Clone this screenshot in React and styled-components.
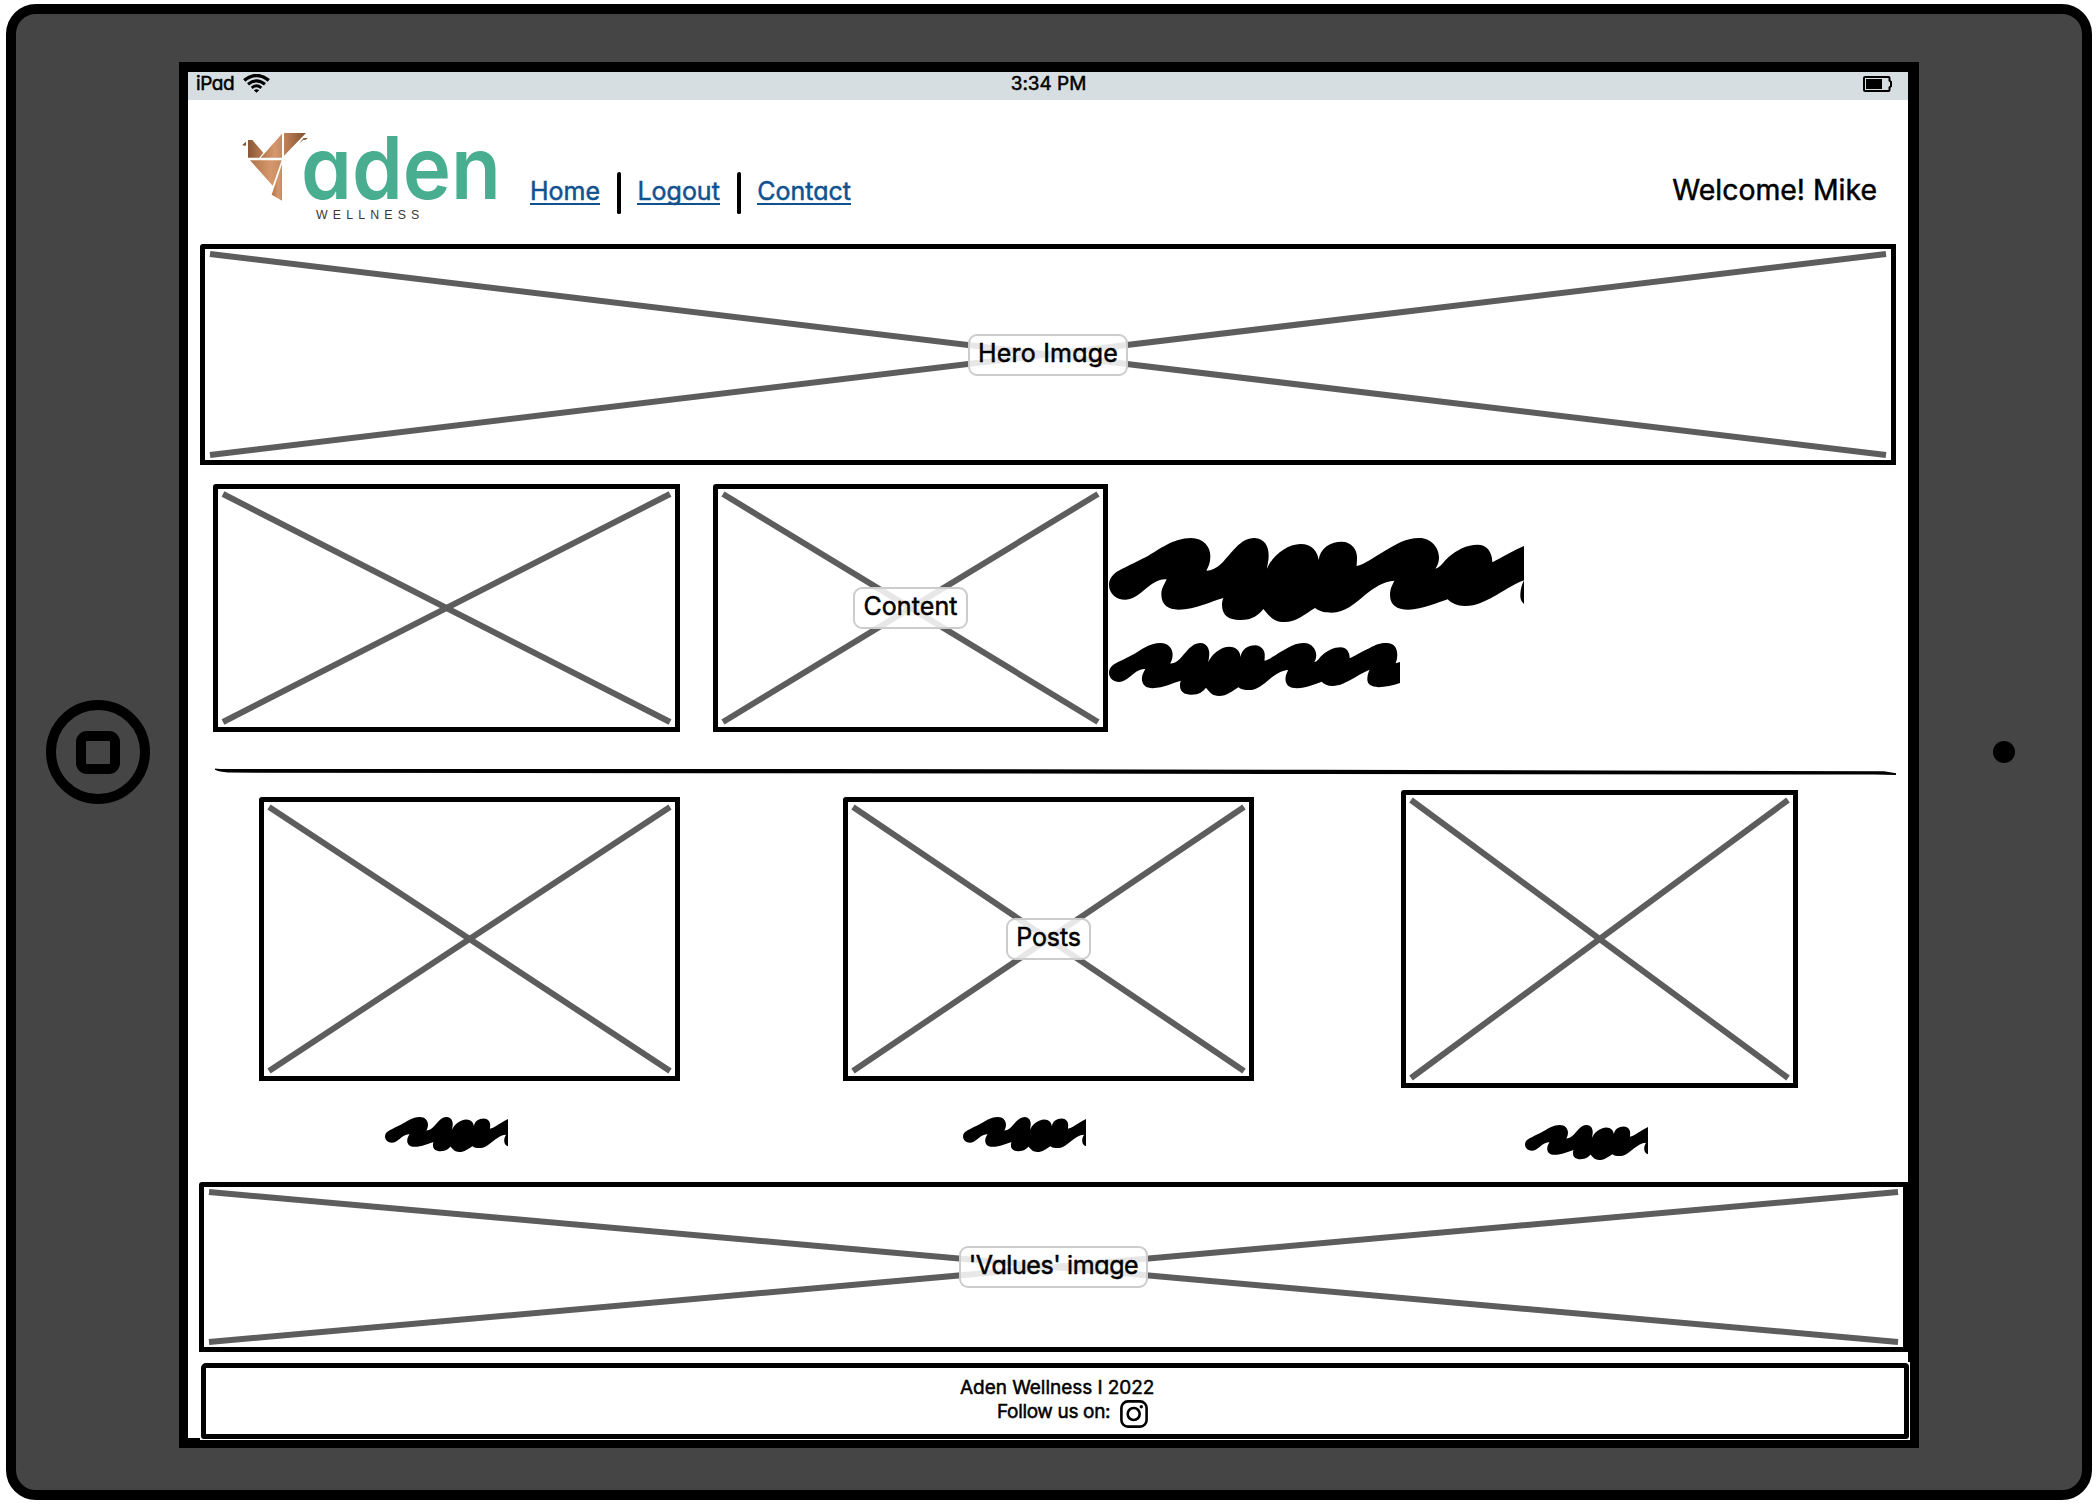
import React from 'react';
import styled, { createGlobalStyle } from 'styled-components';

const Global = createGlobalStyle`
  *, *::before, *::after { box-sizing: border-box; }
  body { margin: 0; background: #fff; }
`;

const Page = styled.div`
  width: 2096px;
  height: 1504px;
  padding: 4px 4px 4px 6px;
  overflow: hidden;
  color: #000;
  font-family: Inter, 'Liberation Sans', sans-serif;
  font-feature-settings: 'cv11' 1;
  -webkit-text-stroke: 0.5px currentColor;
`;

const Device = styled.div`
  display: flex;
  width: 2086px;
  height: 1496px;
  border: 10px solid #000;
  border-radius: 30px;
  background: #454545;
`;

const Bezel = styled.div`
  flex: none;
  display: flex;
  align-items: center;
  width: ${(p) => p.$width}px;
  padding-left: ${(p) => p.$inset}px;
`;

const HomeButton = styled.div`
  display: grid;
  place-items: center;
  width: 104px;
  height: 104px;
  border: 10px solid #000;
  border-radius: 50%;
`;

const HomeGlyph = styled.div`
  width: 44px;
  height: 43px;
  border: 10px solid #000;
  border-radius: 11px;
`;

const Camera = styled.div`
  width: 22px;
  height: 22px;
  border-radius: 50%;
  background: #000;
`;

const Screen = styled.div`
  flex: none;
  width: 1740px;
  height: 1386px;
  margin-top: 48px;
  border: solid #000;
  border-width: 10px 11px 10px 9px;
  background: #fff;
`;

const StatusBar = styled.div`
  display: grid;
  grid-template-columns: 1fr auto 1fr;
  height: 28px;
  padding: 0 16px 0 8px;
  background: #d7dee1;
  font-size: 19px;
  line-height: 23px;
`;

const StatusGroup = styled.div`
  display: flex;
  gap: 9px;
  justify-content: ${(p) => (p.$end ? 'flex-end' : 'flex-start')};
  letter-spacing: -0.4px;
`;

const StatusIcon = styled.svg`
  flex: none;
  margin-top: ${(p) => p.$top}px;
`;

const Clock = styled.span`
  margin-left: 9px;
  letter-spacing: -0.05px;
`;

const Header = styled.header`
  display: flex;
  align-items: flex-start;
  height: 144px;
  padding: 0 31px 0 32px;
`;

const Logo = styled.svg`
  flex: none;
  width: 290px;
  height: 130px;
  -webkit-text-stroke: 0;
`;

const Nav = styled.nav`
  display: flex;
  gap: 16.7px;
  margin: 72px 0 0 20px;
`;

const NavLink = styled.a`
  height: 33px;
  padding-top: 4px;
  color: #10528f;
  font-size: 25px;
  line-height: 30px;
  border-bottom: 2px solid #10528f;
`;

const NavDivider = styled.span`
  width: 4px;
  height: 42px;
  border-radius: 3px 2px 2px 2px;
  background: #000;
`;

const Welcome = styled.div`
  margin: 73px 0 0 auto;
  font-size: 28.4px;
  line-height: 34px;
`;

const Sketch = styled.div`
  flex: none;
  display: grid;
  width: ${(p) => p.$w}px;
  height: ${(p) => p.$h}px;
  margin-left: ${(p) => p.$left || 0}px;
  padding: 5px;
  border: 5px solid #000;
  border-radius: 3px 0 0 0;
  background: #fff;

  > * { grid-area: 1 / 1; }
`;

const Cross = styled.svg`
  width: 100%;
  height: 100%;
  overflow: visible;
  stroke: #5d5d5d;
  stroke-width: 6;
`;

const Tag = styled.span`
  place-self: center;
  z-index: 1;
  height: 42px;
  padding: 2px 8px 0;
  border: 2px solid #ccc;
  border-radius: 9px;
  background: rgba(255, 255, 255, 0.85);
  font-size: 25px;
  line-height: 30px;
  letter-spacing: ${(p) => p.$tracking || 0}px;
  white-space: nowrap;
`;

const ContentRow = styled.section`
  display: flex;
  gap: 33px;
  margin-top: 19px;
  padding-left: 25px;
`;

const ContentCell = styled.div`
  display: flex;
  gap: 1px;
`;

const TextLines = styled.div`
  display: flex;
  flex-direction: column;
  gap: 21px;
  padding-top: 54px;
`;

const Ink = styled.svg`
  flex: none;
  display: block;
  margin-left: ${(p) => p.$left || 0}px;
`;

const Divider = styled.svg`
  display: block;
  margin: 35px 0 15px 26px;
`;

const Posts = styled.section`
  display: flex;
  align-items: flex-start;
  height: 392px;
  padding-left: 71px;
`;

const Post = styled.article`
  flex: none;
  display: flex;
  flex-direction: column;
  gap: ${(p) => p.$gap}px;
  margin-top: ${(p) => p.$top}px;
  margin-right: ${(p) => p.$space}px;
`;

const Footer = styled.footer`
  width: 1710px;
  height: 78px;
  margin: 10px 0 0 12px;
  padding: 1px;
  background: #fff;
`;

const FooterBox = styled.div`
  display: flex;
  flex-direction: column;
  height: 76px;
  padding: 8px 0 0 754px;
  border: 5px solid #000;
  border-radius: 5px 4px 3px 3px;
  font-size: 19px;
  line-height: 24px;
  letter-spacing: -0.05px;
`;

const FollowLine = styled.div`
  display: flex;
  gap: 10px;
  padding-left: 37px;
  letter-spacing: -0.35px;
`;

const INK =
  'M105 299C80 299 57 282 57 255C57 235 70 220 90 210C110 199 150 180 175 167C205 150 250 114 303 114C340 114 361 140 361 168C361 190 355 200 349 212C365 212 380 205 395 190C425 160 450 114 493 114C525 116 536 140 536 165C536 185 532 195 531 206C545 170 590 132 632 132C665 132 683 155 686 180C690 145 720 125 755 125C785 125 801 150 801 170C801 185 800 190 800 198C830 190 850 172 880 155C915 135 945 114 988 114C1025 114 1047 145 1047 172C1047 190 1040 200 1037 206C1055 200 1060 185 1075 172C1100 150 1130 134 1163 134C1190 134 1207 155 1207 187C1240 170 1270 152 1300 139C1330 122 1350 114 1383 114C1420 114 1434 140 1434 170C1434 190 1430 200 1426 210L1460 200L1460 300C1420 315 1380 324 1344 324C1310 322 1291 310 1291 289C1291 265 1296 255 1302 241C1265 255 1240 275 1210 290C1185 303 1160 318 1125 318C1100 318 1085 310 1073 298C1040 308 1000 328 955 329C920 329 900 315 900 285C900 265 907 255 913 242C880 243 850 265 825 285C795 310 765 338 725 338C705 338 690 335 675 324C645 342 620 366 583 366C550 366 540 350 520 327C505 345 490 360 450 360C415 360 396 345 396 315C396 305 398 300 400 294C360 305 320 328 265 329C235 329 214 315 214 283C214 265 222 255 230 238C205 235 180 255 160 272C140 288 125 299 105 299Z';

function Scribble({ w, h, span, left }) {
  return (
    <Ink width={w} height={h} viewBox={`57 114 ${span} 252`} preserveAspectRatio="none" $left={left}>
      <path d={INK} />
    </Ink>
  );
}

function Placeholder({ w, h, left, label, tracking }) {
  return (
    <Sketch $w={w} $h={h} $left={left}>
      <Cross>
        <line x1="0" y1="0" x2="100%" y2="100%" />
        <line x1="0" y1="100%" x2="100%" y2="0" />
      </Cross>
      {label && <Tag $tracking={tracking}>{label}</Tag>}
    </Sketch>
  );
}

function AdenLogo() {
  return (
    <Logo viewBox="0 0 870 390">
      <defs>
        <linearGradient id="copperL">
          <stop offset="0" stopColor="#8a5736" />
          <stop offset="1" stopColor="#bb7d53" />
        </linearGradient>
        <linearGradient id="copperM">
          <stop offset="0" stopColor="#b1744b" />
          <stop offset="0.65" stopColor="#d5986c" />
          <stop offset="1" stopColor="#c68a60" />
        </linearGradient>
        <linearGradient id="copperR">
          <stop offset="0" stopColor="#c08359" />
          <stop offset="1" stopColor="#83502f" />
        </linearGradient>
      </defs>
      <path fill="#80502f" d="M66 136L78 125V137Z" />
      <path fill="url(#copperL)" d="M84 120H97L130 158L118 173H84Z" />
      <path fill="url(#copperM)" d="M186 101V173H122Z" />
      <path fill="url(#copperR)" d="M192 99H258L192 167Z" />
      <path fill="#80502f" d="M237 131L250 115L264 113L256 120L250 119Z" />
      <path fill="url(#copperM)" d="M90 181H185L158 257Z" />
      <path fill="url(#copperM)" d="M186 192V302L155 284Z" />
      <text
        x="243"
        y="296"
        fill="#49ae90"
        fontSize="260"
        fontWeight="600"
        textLength="600"
        lengthAdjust="spacingAndGlyphs"
      >
        aden
      </text>
      <text x="288" y="357" fill="#40362f" fontFamily="Liberation Sans, sans-serif" fontSize="37" textLength="310">
        WELLNESS
      </text>
    </Logo>
  );
}

export default function App() {
  return (
    <Page>
      <Global />
      <Device>
        <Bezel $width={163} $inset={30}>
          <HomeButton>
            <HomeGlyph />
          </HomeButton>
        </Bezel>

        <Screen>
          <StatusBar>
            <StatusGroup>
              iPad
              <StatusIcon $top={2} width="27" height="19" viewBox="0 0 27 19" fill="none" stroke="#000">
                <path d="M1.2 6.3Q13.5 -3.2 25.8 6.3" strokeWidth="3.5" />
                <path d="M5 10.2Q13.5 3.4 22 10.2" strokeWidth="3.1" />
                <path d="M8.7 13.8Q13.5 9.8 18.3 13.8" strokeWidth="2.8" />
                <path d="M13.5 18.8L10.8 16.3Q13.5 14.4 16.2 16.3Z" fill="#000" stroke="none" />
              </StatusIcon>
            </StatusGroup>
            <Clock>3:34 PM</Clock>
            <StatusGroup $end>
              <StatusIcon $top={4} width="29" height="16" viewBox="0 0 29 16">
                <path
                  d="M2 1H25.5Q26.5 1 26.5 2V4.5L28 6V10L26.5 11.5V14Q26.5 15 25.5 15H2Q1 15 1 14V2Q1 1 2 1Z"
                  fill="none"
                  stroke="#000"
                  strokeWidth="2"
                />
                <rect x="3" y="3" width="16" height="10" />
              </StatusIcon>
            </StatusGroup>
          </StatusBar>

          <Header>
            <AdenLogo />
            <Nav>
              <NavLink>Home</NavLink>
              <NavDivider />
              <NavLink>Logout</NavLink>
              <NavDivider />
              <NavLink>Contact</NavLink>
            </Nav>
            <Welcome>Welcome! Mike</Welcome>
          </Header>

          <Placeholder w={1696} h={221} left={12} label="Hero Image" tracking={0.2} />

          <ContentRow>
            <Placeholder w={467} h={248} />
            <ContentCell>
              <Placeholder w={395} h={248} label="Content" tracking={0.1} />
              <TextLines>
                <Scribble w={415} h={84} span={1245} />
                <Scribble w={291} h={53} span={1390} />
              </TextLines>
            </ContentCell>
          </ContentRow>

          <Divider width="1682" height="8" viewBox="0 0 1682 8">
            <path d="M1 1.5Q6 2.2 20 2L600 2L1100 2.8L1670 4.2Q1676 5 1682 6.2V8L1660 7.6L1100 7L500 6.2L14 5.6Q5 4.8 1 2.8Z" />
          </Divider>

          <Posts>
            <Post $top={6.5} $gap={36.5} $space={163}>
              <Placeholder w={421} h={284} />
              <Scribble w={123} h={35} span={870} left={126} />
            </Post>
            <Post $top={6.5} $gap={36.5} $space={147}>
              <Placeholder w={411} h={284} label="Posts" tracking={-0.1} />
              <Scribble w={123} h={35} span={870} left={120} />
            </Post>
            <Post $top={0} $gap={37} $space={0}>
              <Placeholder w={397} h={298} />
              <Scribble w={123} h={35} span={870} left={124} />
            </Post>
          </Posts>

          <Placeholder w={1709} h={170} left={11} label="'Values' image" tracking={-0.4} />

          <Footer>
            <FooterBox>
              <div>Aden Wellness I 2022</div>
              <FollowLine>
                Follow us on:
                <svg width="28" height="28" viewBox="0 0 28 28" fill="none" stroke="#000">
                  <rect x="1.4" y="1.4" width="25.2" height="25.2" rx="6.5" strokeWidth="2.6" />
                  <circle cx="13.7" cy="14" r="6" strokeWidth="2.6" />
                  <circle cx="21.3" cy="6.8" r="1.7" fill="#000" stroke="none" />
                </svg>
              </FollowLine>
            </FooterBox>
          </Footer>
        </Screen>

        <Bezel $width={163} $inset={74}>
          <Camera />
        </Bezel>
      </Device>
    </Page>
  );
}
